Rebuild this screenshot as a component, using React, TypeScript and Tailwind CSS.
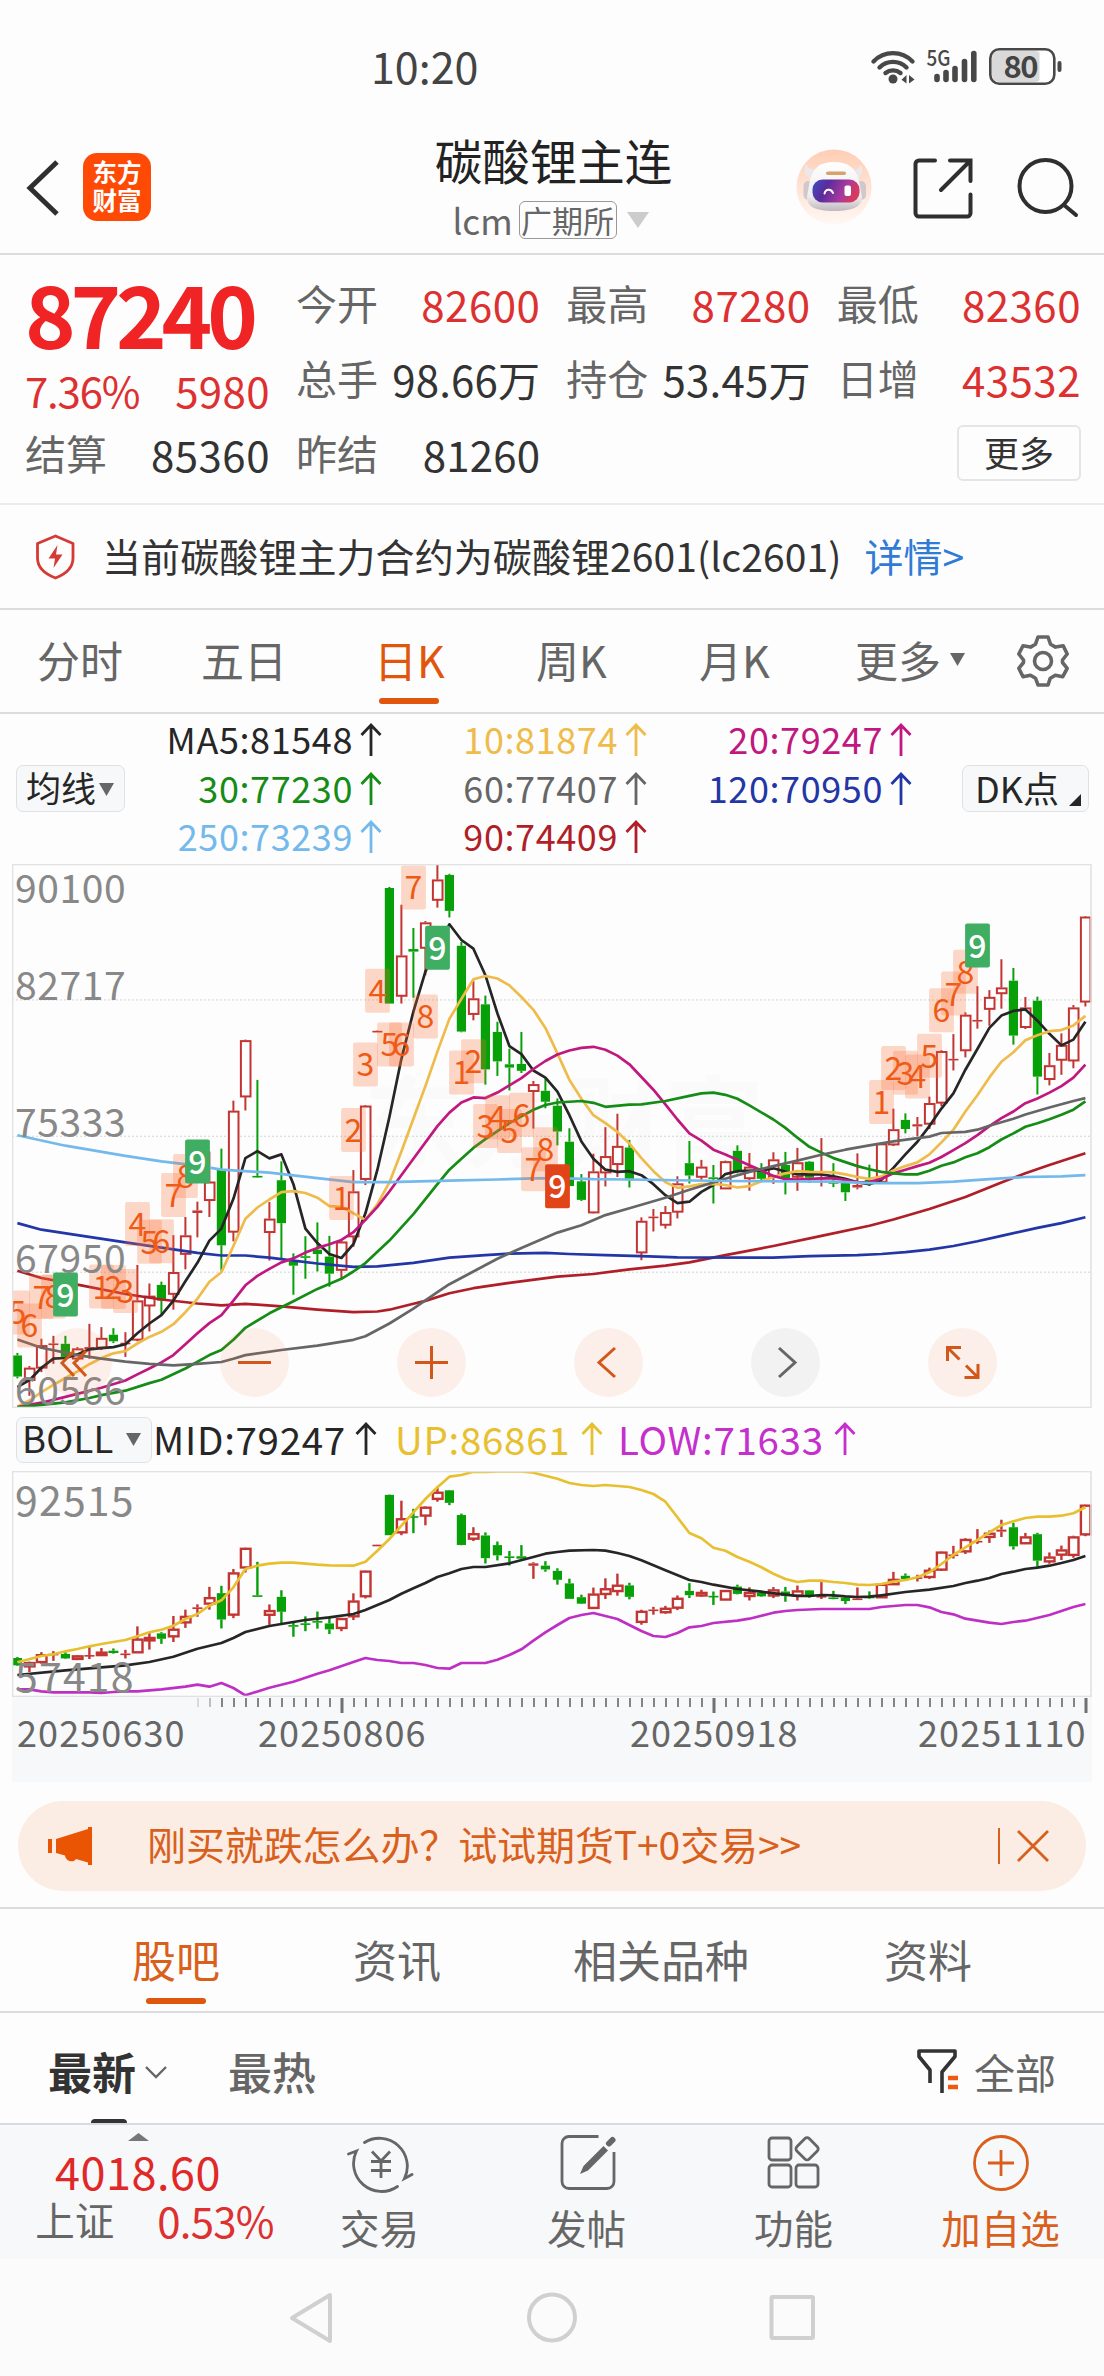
import React from 'react';

// Candles are stored as chart levels: [rising, high, body top, body bottom, low]
const candles = [
  [0, 1384, 1391, 1449, 1454], [1, 1420, 1425, 1459, 1502], [1, 1345, 1363, 1425, 1437],
  [1, 1337, 1358, 1362, 1414], [0, 1337, 1359, 1395, 1400], [1, 1368, 1372, 1400, 1408],
  [1, 1304, 1368, 1374, 1400], [1, 1313, 1343, 1370, 1376], [0, 1316, 1334, 1352, 1357],
  [1, 1327, 1356, 1360, 1395], [1, 1142, 1240, 1348, 1352], [1, 1193, 1227, 1254, 1325],
  [0, 1188, 1197, 1240, 1280], [1, 1060, 1162, 1222, 1265], [1, 1010, 1061, 1112, 1154],
  [1, 968, 992, 999, 1066], [1, 830, 913, 964, 1010], [0, 822, 880, 1088, 1158],
  [1, 690, 718, 1051, 1077], [1, 522, 524, 679, 717], [0, 633, 897, 900, 901],
  [1, 969, 1015, 1052, 1130], [0, 857, 909, 1027, 1125], [0, 1110, 1132, 1144, 1224],
  [0, 1063, 1118, 1122, 1180], [0, 1025, 1100, 1112, 1160], [0, 1062, 1119, 1166, 1202],
  [1, 1075, 1078, 1156, 1180], [1, 881, 940, 1064, 1092], [1, 702, 704, 906, 922],
  [1, 497, 498, 500, 500], [0, 102, 105, 423, 423], [1, 151, 291, 402, 423],
  [0, 215, 273, 280, 407], [1, 196, 200, 270, 345], [1, 39, 82, 138, 159],
  [0, 66, 69, 168, 186], [0, 253, 264, 500, 502], [1, 360, 409, 452, 469],
  [0, 401, 425, 604, 646], [0, 473, 501, 582, 622], [0, 547, 590, 599, 662],
  [0, 501, 589, 608, 614], [1, 636, 645, 664, 767], [0, 628, 663, 693, 711],
  [0, 684, 704, 775, 813], [0, 766, 803, 925, 925], [0, 892, 912, 963, 966],
  [1, 836, 885, 998, 1000], [1, 763, 843, 888, 926], [1, 726, 815, 865, 900],
  [0, 798, 819, 909, 929], [1, 1011, 1021, 1108, 1129], [1, 988, 1009, 1012, 1050],
  [1, 980, 997, 1032, 1042], [1, 898, 918, 996, 1014], [0, 801, 862, 896, 918],
  [1, 853, 872, 900, 908], [0, 867, 901, 905, 973], [1, 855, 857, 932, 932],
  [0, 813, 828, 886, 890], [1, 834, 872, 904, 938], [0, 862, 875, 905, 910],
  [1, 832, 852, 900, 919], [0, 831, 867, 903, 948], [1, 820, 860, 900, 938],
  [0, 856, 858, 902, 916], [1, 793, 902, 906, 926], [0, 862, 914, 918, 928],
  [0, 910, 916, 942, 966], [1, 835, 922, 929, 934], [0, 866, 908, 920, 925],
  [1, 806, 808, 914, 916], [1, 712, 769, 811, 815], [0, 725, 743, 768, 780],
  [1, 735, 755, 761, 788], [1, 679, 697, 754, 768], [1, 551, 554, 696, 705],
  [1, 507, 575, 579, 607], [1, 447, 454, 552, 571], [1, 375, 468, 472, 492],
  [1, 386, 405, 438, 484], [1, 301, 379, 395, 437], [0, 325, 360, 511, 536],
  [1, 405, 434, 488, 493], [0, 404, 415, 624, 673], [1, 559, 593, 631, 648],
  [1, 505, 537, 578, 619], [1, 427, 434, 580, 601], [1, 182, 184, 418, 431],
];

// Each line is a flat list of candle index / level pairs
const averages = [
  { color: '#b01e28', points: [0, 1158, 2, 1178, 5, 1196, 9, 1222, 12, 1237, 15, 1248, 17, 1253, 19, 1249, 22, 1256, 25, 1265, 28, 1272, 30, 1270, 31, 1265, 33, 1249, 34, 1241, 36, 1220, 38, 1206, 41, 1191, 45, 1174, 48, 1167, 51, 1154, 54, 1144, 56, 1135, 59, 1115, 63, 1090, 67, 1062, 71, 1034, 73, 1017, 76, 988, 79, 955, 82, 915, 84, 890, 86, 867, 89, 835] },
  { color: '#2236a6', points: [0, 1027, 2, 1045, 5, 1060, 9, 1080, 13, 1099, 15, 1109, 17, 1116, 19, 1116, 21, 1122, 23, 1130, 25, 1138, 28, 1147, 30, 1146, 33, 1136, 36, 1122, 39, 1115, 41, 1111, 44, 1109, 46, 1112, 49, 1115, 52, 1118, 55, 1121, 63, 1122, 66, 1118, 70, 1115, 72, 1112, 74, 1107, 76, 1100, 78, 1090, 80, 1077, 82, 1062, 85, 1040, 87, 1027, 89, 1011] },
  { color: '#262626', points: [0, 1478, 1, 1459, 2, 1425, 3, 1400, 4, 1398, 5, 1388, 6, 1374, 7, 1371, 8, 1368, 9, 1360, 10, 1330, 11, 1303, 12, 1280, 13, 1240, 14, 1187, 15, 1136, 16, 1075, 17, 1042, 18, 960, 19, 848, 20, 829, 21, 849, 22, 838, 23, 920, 24, 1042, 25, 1082, 26, 1112, 27, 1123, 28, 1085, 29, 1000, 30, 880, 31, 735, 32, 575, 33, 445, 34, 335, 35, 268, 36, 205, 37, 248, 38, 272, 39, 345, 40, 450, 41, 540, 42, 562, 43, 607, 44, 627, 45, 665, 46, 730, 47, 802, 48, 850, 49, 880, 50, 886, 51, 884, 52, 895, 53, 920, 54, 950, 55, 972, 56, 968, 57, 941, 58, 922, 59, 892, 60, 884, 62, 882, 63, 876, 64, 885, 65, 893, 67, 893, 68, 898, 69, 905, 70, 915, 71, 920, 72, 908, 73, 875, 74, 838, 75, 803, 76, 760, 77, 712, 78, 670, 79, 605, 80, 548, 81, 490, 82, 456, 83, 443, 84, 439, 85, 470, 86, 506, 87, 538, 88, 522, 89, 473] },
  { color: '#efbb4a', points: [0, 1532, 1, 1515, 2, 1492, 3, 1472, 4, 1453, 5, 1435, 6, 1415, 7, 1398, 8, 1385, 9, 1379, 10, 1358, 11, 1340, 12, 1326, 13, 1305, 14, 1272, 15, 1235, 16, 1188, 17, 1162, 18, 1090, 19, 1015, 20, 984, 21, 962, 22, 942, 23, 939, 24, 944, 25, 957, 26, 980, 27, 982, 28, 1000, 29, 1018, 30, 975, 31, 915, 32, 830, 33, 740, 34, 650, 35, 555, 36, 465, 37, 410, 38, 356, 39, 347, 40, 354, 41, 373, 42, 405, 43, 440, 44, 490, 45, 560, 46, 633, 47, 685, 48, 730, 49, 752, 50, 776, 51, 808, 52, 848, 53, 884, 54, 914, 55, 930, 56, 926, 57, 920, 58, 919, 59, 922, 60, 929, 61, 925, 62, 912, 63, 900, 64, 890, 65, 884, 66, 886, 68, 887, 69, 893, 70, 900, 71, 905, 72, 899, 73, 882, 74, 870, 75, 860, 76, 838, 77, 805, 78, 770, 79, 720, 80, 675, 81, 626, 82, 583, 83, 557, 84, 524, 85, 510, 86, 499, 87, 496, 88, 483, 89, 457] },
  { color: '#c0187e', points: [0, 1533, 2, 1521, 4, 1505, 7, 1480, 9, 1460, 10, 1443, 11, 1427, 12, 1410, 13, 1390, 14, 1360, 15, 1330, 16, 1302, 17, 1280, 18, 1240, 19, 1198, 20, 1172, 21, 1153, 22, 1135, 23, 1124, 24, 1108, 25, 1095, 26, 1085, 27, 1073, 28, 1052, 29, 1018, 30, 982, 31, 940, 33, 850, 35, 760, 36, 723, 37, 695, 38, 681, 39, 683, 40, 668, 41, 648, 42, 628, 43, 603, 44, 581, 45, 563, 46, 552, 47, 545, 48, 542, 49, 550, 50, 566, 51, 590, 52, 625, 53, 660, 54, 700, 55, 742, 56, 780, 57, 800, 58, 825, 59, 838, 61, 868, 62, 882, 63, 897, 64, 906, 65, 907, 67, 904, 68, 904, 69, 908, 70, 915, 71, 914, 72, 905, 73, 890, 74, 880, 75, 870, 76, 861, 77, 845, 78, 826, 79, 807, 80, 785, 81, 760, 82, 738, 83, 720, 84, 697, 85, 684, 86, 668, 87, 650, 88, 627, 89, 591] },
  { color: '#158c15', points: [0, 1534, 2, 1527, 4, 1520, 6, 1508, 7, 1500, 9, 1488, 11, 1467, 12, 1458, 14, 1427, 16, 1390, 17, 1376, 18, 1348, 19, 1315, 21, 1275, 23, 1242, 25, 1208, 27, 1180, 28, 1160, 29, 1137, 31, 1075, 33, 1002, 35, 920, 36, 880, 37, 850, 38, 820, 39, 796, 41, 752, 42, 733, 43, 715, 44, 702, 45, 695, 47, 691, 48, 696, 49, 707, 51, 701, 52, 700, 54, 691, 56, 677, 57, 670, 58, 668, 59, 674, 60, 685, 61, 703, 63, 742, 64, 765, 65, 792, 66, 817, 67, 833, 68, 848, 70, 870, 71, 879, 72, 886, 73, 890, 74, 893, 75, 893, 76, 883, 77, 869, 78, 860, 79, 846, 80, 835, 81, 818, 82, 797, 83, 780, 84, 762, 85, 752, 86, 741, 87, 729, 88, 715, 89, 692] },
  { color: '#666666', points: [0, 1347, 2, 1370, 5, 1390, 7, 1400, 9, 1408, 11, 1414, 13, 1418, 15, 1414, 17, 1409, 18, 1400, 19, 1390, 22, 1376, 25, 1364, 28, 1348, 29, 1338, 31, 1303, 33, 1262, 35, 1217, 36, 1195, 38, 1160, 40, 1125, 42, 1095, 45, 1053, 47, 1033, 49, 1005, 51, 986, 54, 957, 56, 935, 59, 905, 61, 886, 63, 870, 65, 855, 67, 839, 69, 825, 71, 813, 73, 802, 75, 793, 76, 789, 77, 779, 79, 776, 80, 770, 81, 759, 83, 740, 84, 728, 86, 709, 88, 691, 89, 683] },
  { color: '#74b9ec', points: [0, 785, 4, 814, 9, 842, 12, 857, 15, 869, 17, 880, 21, 888, 25, 903, 28, 914, 31, 914, 36, 910, 40, 907, 43, 904, 45, 903, 48, 906, 51, 907, 59, 911, 68, 913, 71, 917, 75, 917, 78, 913, 81, 906, 84, 900, 87, 898, 89, 895] },
];

const bands = [
  { color: '#262626', points: [0, 828, 4, 814, 9, 799, 11, 789, 13, 773, 15, 749, 17, 732, 18, 717, 19, 699, 21, 681, 22, 675, 24, 663, 26, 655, 28, 645, 29, 633, 31, 603, 32, 584, 33, 568, 34, 552, 35, 534, 36, 523, 37, 510, 38, 504, 39, 504, 41, 493, 43, 474, 44, 464, 45, 459, 46, 455, 48, 453, 49, 455, 50, 462, 51, 471, 52, 484, 54, 514, 56, 543, 57, 549, 58, 557, 60, 570, 62, 578, 64, 587, 65, 591, 66, 591, 67, 588, 68, 589, 69, 592, 70, 594, 71, 593, 72, 589, 74, 579, 76, 572, 78, 561, 79, 552, 80, 545, 81, 537, 82, 525, 83, 518, 84, 510, 85, 506, 86, 500, 87, 492, 88, 483, 89, 471] },
  { color: '#e8c02f', points: [0, 790, 2, 771, 3, 766, 4, 757, 5, 750, 6, 742, 7, 735, 8, 729, 9, 723, 10, 712, 11, 700, 12, 692, 13, 680, 14, 660, 15, 645, 16, 620, 17, 604, 18, 565, 19, 510, 20, 500, 21, 494, 22, 491, 23, 491, 24, 494, 25, 497, 26, 499, 28, 500, 29, 488, 30, 455, 31, 420, 32, 380, 33, 340, 34, 300, 35, 265, 36, 233, 37, 228, 38, 218, 39, 219, 40, 217, 42, 217, 43, 221, 44, 230, 45, 239, 46, 252, 47, 258, 48, 261, 49, 258, 50, 261, 51, 264, 52, 273, 53, 285, 54, 308, 55, 355, 56, 402, 57, 418, 58, 446, 59, 455, 60, 474, 61, 488, 62, 505, 63, 524, 64, 540, 65, 549, 66, 545, 67, 545, 68, 549, 69, 552, 70, 557, 71, 558, 72, 555, 73, 548, 74, 543, 75, 535, 76, 520, 77, 495, 78, 468, 79, 445, 80, 423, 81, 400, 82, 378, 83, 367, 84, 357, 85, 353, 86, 353, 87, 350, 88, 343, 89, 325] },
  { color: '#be30c4', points: [0, 871, 1, 871, 2, 877, 3, 880, 6, 880, 7, 882, 8, 879, 9, 877, 10, 877, 12, 871, 14, 863, 15, 857, 16, 863, 17, 852, 18, 867, 19, 889, 21, 866, 23, 848, 25, 824, 26, 814, 28, 789, 29, 777, 30, 783, 31, 786, 32, 792, 33, 792, 34, 798, 35, 807, 36, 809, 37, 792, 39, 792, 40, 782, 41, 768, 42, 751, 43, 725, 44, 700, 45, 678, 46, 657, 47, 648, 48, 642, 50, 660, 52, 696, 53, 711, 54, 714, 55, 702, 56, 685, 57, 681, 58, 672, 60, 665, 61, 659, 63, 641, 64, 636, 65, 633, 67, 630, 71, 630, 72, 624, 74, 618, 75, 618, 76, 625, 77, 639, 78, 646, 79, 659, 80, 665, 81, 671, 82, 675, 83, 669, 84, 665, 86, 648, 88, 624, 89, 615] },
];

// Sequence counters: [candle index, digit, top level]
const counters = [
  [0, 5, 1212], [1, 6, 1248], [2, 7, 1170], [3, 8, 1168], [4, 9, 1163],
  [7, 1, 1141], [8, 2, 1142], [9, 3, 1153], [10, 4, 969], [11, 5, 1018],
  [12, 6, 1016], [13, 7, 889], [14, 8, 837], [15, 9, 797],
  [27, 1, 897], [28, 2, 710], [29, 3, 530], [30, 4, 327], [31, 5, 475],
  [32, 6, 475], [33, 7, 43], [34, 8, 398], [35, 9, 209],
  [37, 1, 552], [38, 2, 521], [39, 3, 699], [40, 4, 675], [41, 5, 713],
  [42, 6, 668], [43, 7, 818], [44, 8, 763], [45, 9, 865],
  [72, 1, 633], [73, 2, 540], [74, 3, 553], [75, 4, 563], [76, 5, 506],
  [77, 6, 381], [78, 7, 335], [79, 8, 275], [80, 9, 203],
];

const RED = '#c23532';
const GREEN = '#08a008';

const xOf = (i: number) => 5.4 + i * 12;
const mainY = (v: number) => (v - 39) / 2.751;
const subY = (v: number) => ((2415 + (v - 39) * 19.755) / 35097) * 225.3;
const bandY = (v: number) => (v - 216) / 3;

const toPoints = (points: number[], y: (v: number) => number) => {
  const out: string[] = [];
  for (let k = 0; k < points.length; k += 2) {
    out.push(`${xOf(points[k]).toFixed(1)},${y(points[k + 1]).toFixed(1)}`);
  }
  return out.join(' ');
};

const Candles = ({ y, stroke }: { y: (v: number) => number; stroke: number }) => (
  <g>
    {candles.map(([rising, high, top, bottom, low], i) => {
      const x = xOf(i);
      const color = rising ? RED : GREEN;
      const h = y(bottom) - y(top);
      return (
        <g key={i} stroke={color} strokeWidth={stroke}>
          <line x1={x} x2={x} y1={y(high)} y2={y(top)} />
          <line x1={x} x2={x} y1={y(bottom)} y2={y(low)} />
          {h < 2.6 ? (
            <rect x={x - 5} y={y(top)} width={10} height={Math.max(h, 1.6)} fill={color} stroke="none" />
          ) : rising ? (
            <rect x={x - 4.5} y={y(top) + 0.8} width={9.6} height={Math.max(h - 1, 1)} fill="#fff" />
          ) : (
            <rect x={x - 4.6} y={y(top)} width={9.2} height={h} fill={color} stroke="none" />
          )}
        </g>
      );
    })}
  </g>
);

const Counters = () => (
  <g fontSize={32} textAnchor="middle">
    {counters.map(([i, digit, top], k) => {
      const nine = digit === 9;
      const fill = nine ? (i === 45 ? '#e2441a' : '#3fae63') : '#fa6e32';
      return (
        <g key={k}>
          <rect x={xOf(i) - 12.3} y={mainY(top)} width={24.8} height={44} rx={2} fill={fill} fillOpacity={nine ? 1 : 0.26} />
          <text x={xOf(i)} y={mainY(top) + 34} fill={nine ? '#fff' : '#ee5a14'} fontWeight={nine ? 500 : 400}>
            {digit}
          </text>
        </g>
      );
    })}
  </g>
);

const MainChart = () => (
  <svg width="1080" height="544" viewBox="0 0 1080 544" className="block">
    <defs>
      <clipPath id="main-clip">
        <rect x="0" y="0" width="1080" height="544" />
      </clipPath>
    </defs>
    <text x="352" y="296" fontSize="100" fontWeight="700" fill="#fafafa">
      东方财富
    </text>
    {[413, 788, 1162].map((v) => (
      <line key={v} x1="0" x2="1079" y1={mainY(v)} y2={mainY(v)} stroke="#d4d4d4" strokeWidth="1" strokeDasharray="2 2" />
    ))}
    <g clipPath="url(#main-clip)">
      <Candles y={mainY} stroke={2} />
      <g fill="none" strokeWidth="2.7" strokeLinejoin="round">
        {averages.map((line) => (
          <polyline key={line.color} points={toPoints(line.points, mainY)} stroke={line.color} />
        ))}
      </g>
      <Counters />
    </g>
    <g fontSize="39" fill="#888" letterSpacing="0.6">
      <text x="3" y="38.5">90100</text>
      <text x="3" y="136">82717</text>
      <text x="3" y="272.5">75333</text>
      <text x="3" y="408.5">67950</text>
      <text x="3" y="540.5">60566</text>
    </g>
    <rect x="0.5" y="0.5" width="1078.5" height="543" fill="none" stroke="#e2e2e2" strokeWidth="1.6" />
  </svg>
);

const BollChart = () => (
  <svg width="1080" height="226" viewBox="0 0 1080 226" className="block">
    <Candles y={subY} stroke={2.4} />
    <g fill="none" strokeWidth="2.7" strokeLinejoin="round">
      {bands.map((line) => (
        <polyline key={line.color} points={toPoints(line.points, bandY)} stroke={line.color} />
      ))}
    </g>
    <g fontSize="41" fill="#888" letterSpacing="1.2">
      <text x="3" y="45">92515</text>
      <text x="3" y="220.5">57418</text>
    </g>
    <rect x="0.5" y="0.5" width="1078.5" height="225" fill="none" stroke="#e2e2e2" strokeWidth="1.6" />
  </svg>
);

const DateAxis = () => (
  <svg width="1080" height="85" viewBox="0 0 1080 85" className="block bg-[#f7f8fa]">
    {candles.map((_, i) => {
      if (i < 15) return null;
      const major = i === 27 || i === 58 || i === 89;
      return (
        <line
          key={i}
          x1={xOf(i) + 0.6}
          x2={xOf(i) + 0.6}
          y1={1}
          y2={major ? 16 : 10}
          stroke="#707070"
          strokeWidth={major ? 3 : 1.7}
          opacity={i === 15 ? 0.25 : i === 16 ? 0.5 : 1}
        />
      );
    })}
    <g fontSize="36" fill="#666" letterSpacing="1.1">
      <text x="5" y="49.5">20250630</text>
      <text x="246" y="49.5">20250806</text>
      <text x="618" y="49.5">20250918</text>
      <text x="906" y="49.5">20251110</text>
    </g>
  </svg>
);

const UpArrow = ({ className = '' }: { className?: string }) => (
  <svg width="22" height="34" viewBox="0 0 22 34" fill="none" stroke="currentColor" strokeWidth="2.8" className={className}>
    <path d="M11 33V2M1.5 12 11 2l9.5 10" />
  </svg>
);

const StatusBar = () => (
  <div className="flex h-[90px] items-start pl-[371px] text-[#444]">
    <span className="mt-[35px] h-[55px] text-[43px] leading-[60px]">10:20</span>
    <svg width="200" height="44" viewBox="0 0 200 44" className="ml-[391px] mt-[45px]" fill="none" stroke="#484848">
      <g strokeWidth="4.4" strokeLinecap="round">
        <path d="M4.5 16.5a27 27 0 0 1 39 0" />
        <path d="M10.5 22.5a19 19 0 0 1 27 0" />
        <path d="M16.5 28a12 12 0 0 1 15 0" />
      </g>
      <circle cx="24" cy="34" r="4.5" fill="#484848" stroke="none" />
      <path d="M37.5 30v8.5l-5-3.8zM40 30v8.5l5.5-4z" fill="#484848" stroke="none" />
      <g strokeWidth="5.6" strokeLinecap="round">
        <path d="M68 31.5v3M77 27.5v7M86 23.5v11M95.5 16.5v18M104.8 8.5v26" />
      </g>
      <text x="57.5" y="21" fontSize="22" fontWeight="500" textLength="24" lengthAdjust="spacingAndGlyphs" fill="#484848" stroke="none">
        5G
      </text>
      <rect x="123" y="6" width="50" height="31" rx="7" fill="#d9d9d9" stroke="none" />
      <rect x="170.5" y="8" width="11" height="28" fill="#fff" stroke="none" />
      <rect x="121.3" y="4.3" width="64" height="34.5" rx="9" strokeWidth="2.6" />
      <rect x="188.5" y="16" width="4" height="11" rx="2" fill="#484848" stroke="none" />
      <text x="152" y="32.5" fontSize="31" fontWeight="700" textAnchor="middle" textLength="35" fill="#444" stroke="none">
        80
      </text>
    </svg>
  </div>
);

const Robot = () => (
  <svg width="76" height="76" viewBox="0 0 76 76">
    <defs>
      <linearGradient id="halo" x1="0" y1="0" x2="0" y2="1">
        <stop offset="0" stopColor="#ffcdb4" />
        <stop offset="1" stopColor="#fff8f4" />
      </linearGradient>
      <linearGradient id="visor" x1="0" y1="0" x2="1" y2="0.25">
        <stop offset="0" stopColor="#3d4fc4" />
        <stop offset="0.35" stopColor="#5a2c9c" />
        <stop offset="0.75" stopColor="#a83a9c" />
        <stop offset="1" stopColor="#d8395e" />
      </linearGradient>
      <linearGradient id="shell" x1="0" y1="0" x2="0" y2="1">
        <stop offset="0" stopColor="#ffffff" />
        <stop offset="0.7" stopColor="#efecee" />
        <stop offset="1" stopColor="#bfb9be" />
      </linearGradient>
    </defs>
    <circle cx="38" cy="38" r="37.5" fill="url(#halo)" />
    <path d="M10 15c-3 6-2 12 7 15l6-9c-7 0-11-2-13-6zM65 16c3 6 1 11-6 14l-7-9c7 1 11-1 13-5z" fill="#ece8ea" />
    <rect x="7.5" y="32" width="11" height="19" rx="5" fill="#cfc9ce" />
    <rect x="59" y="32" width="11" height="19" rx="5" fill="#cfc9ce" />
    <path d="M38 13c14 0 22 6 25 19l3 16c0 9-8 14-28 14S11 57 11 48l3-17c3-12 10-18 24-18z" fill="url(#shell)" />
    <rect x="30" y="22.5" width="20" height="3.6" rx="1.8" fill="#d9a26a" />
    <rect x="16.5" y="30.5" width="47" height="23" rx="10" fill="url(#visor)" />
    <path d="M28.5 44.5c1-5 7-5 8.5-.5" fill="none" stroke="#fff" strokeWidth="2" strokeLinecap="round" />
    <rect x="48.5" y="36.5" width="6.5" height="10.5" rx="2" fill="#fff" />
  </svg>
);

const Header = () => (
  <header className="flex h-[165px] items-start border-b-2 border-[#dcdcdc] text-[#333]">
    <svg width="36" height="58" viewBox="0 0 36 58" className="ml-[25px] mt-[69px]" fill="none" stroke="#2f2f2f" strokeWidth="5">
      <path d="M32 3 5 29l27 26" />
    </svg>
    <div className="ml-[22px] mt-[63px] flex h-[68px] w-[68px] flex-col items-center justify-center rounded-[14px] bg-[#ff4a06] pb-[3px] text-[24.5px] font-bold leading-[28px] text-white">
      <span>东方</span>
      <span>财富</span>
    </div>
    <div className="ml-[253px] mt-[41px] flex w-[330px] flex-col items-center">
      <h1 className="-ml-[31px] text-[47.5px] leading-[58px] text-[#222]">碳酸锂主连</h1>
      <div className="-ml-[37px] mt-[12px] flex items-center text-[#666]">
        <span className="text-[35px] leading-[38px]">lcm</span>
        <span className="ml-[6px] flex h-[38px] w-[98px] items-center justify-center rounded-[6px] border-[1.5px] border-[#999] text-[31px] leading-[34px]">
          广期所
        </span>
        <svg width="22" height="16" viewBox="0 0 22 16" className="ml-[10px]">
          <path d="M0 0h22L11 16z" fill="#ccc" />
        </svg>
      </div>
    </div>
    <div className="ml-[62px] mt-[59px] flex">
      <Robot />
      <svg width="62" height="62" viewBox="0 0 62 62" className="ml-[40px] mt-[8px]" fill="none" stroke="#2f2f2f" strokeWidth="4" strokeLinecap="round">
        <path d="M23 3.5H7a3.5 3.5 0 0 0-3.5 3.5v49A3.5 3.5 0 0 0 7 59.5h48a3.500 3.500 0 0 0 3.500-3.500V37.5M38 3.5h20.500V24M57.500 4.500 29 33" />
      </svg>
      <svg width="64" height="64" viewBox="0 0 64 64" className="ml-[41px] mt-[5px]" fill="none" stroke="#2f2f2f" strokeWidth="4" strokeLinecap="round">
        <circle cx="30.5" cy="32" r="26" />
        <path d="m49 51 12 10" />
      </svg>
    </div>
  </header>
);

const quotes = [
  { label: '今开', value: '82600', red: true },
  { label: '最高', value: '87280', red: true },
  { label: '最低', value: '82360', red: true },
  { label: '总手', value: '98.66万', red: false },
  { label: '持仓', value: '53.45万', red: false },
  { label: '日增', value: '43532', red: true },
  { label: '昨结', value: '81260', red: false },
];

const QuotePanel = () => (
  <section className="flex h-[250px] gap-[26px] border-b-2 border-[#ebebeb] pl-[25px] text-[42px]">
    <div className="w-[245px]">
      <div className="mt-[12px] h-[90px] text-[86px] font-bold leading-[90px] tracking-[-5.2px] text-[#f02424]">87240</div>
      <div className="mt-[8px] flex h-[50px] justify-between leading-[50px] text-[#dd3030]">
        <span className="tracking-[-1.2px]">7.36%</span>
        <span className="tracking-[0.4px]">5980</span>
      </div>
      <div className="mt-[13px] flex h-[50px] items-center justify-between">
        <span className="text-[41px] text-[#666]">结算</span>
        <span className="tracking-[0.5px] text-[#333]">85360</span>
      </div>
    </div>
    <div className="grid h-[234px] w-[785px] grid-cols-3 grid-rows-3 gap-x-[26px] pt-[9px]">
      {quotes.map((q) => (
        <div key={q.label} className="flex h-[78px] items-center justify-between whitespace-nowrap">
          <span className="text-[41px] text-[#666]">{q.label}</span>
          <span className={q.red ? 'tracking-[0.5px] text-[#dd3030]' : 'tracking-[0.2px] text-[#333]'}>{q.value}</span>
        </div>
      ))}
      <div className="col-start-3 flex h-[78px] items-center justify-end">
        <button className="h-[56px] w-[124px] rounded-[6px] border-2 border-[#e4e5e7] pb-[3px] text-[35px] leading-[50px] text-[#333]">
          更多
        </button>
      </div>
    </div>
  </section>
);

const Notice = () => (
  <section className="flex h-[105px] items-center border-b-2 border-[#dcdcdc] pl-[35px] text-[39px] text-[#333]">
    <svg width="41" height="46" viewBox="0 0 41 46" fill="none" stroke="#d53a36" strokeWidth="2.8" strokeLinejoin="round">
      <path d="M20.5 2 38 9.5V24c0 9-7 16-17.500 20C10 40 2.500 33 2.500 24V9.500z" />
      <path d="m22.5 11-9 13.500h6.500L18.500 34l9-13.500H21z" fill="#d53a36" stroke="none" />
    </svg>
    <span className="ml-[26px] whitespace-nowrap pb-[2px] tracking-[0.08px]">当前碳酸锂主力合约为碳酸锂2601(lc2601)</span>
    <span className="ml-[23px] whitespace-nowrap pb-[2px] text-[#2f7bd6]">详情&gt;</span>
  </section>
);

const PeriodTabs = () => (
  <nav className="flex h-[104px] items-center border-b-2 border-[#dcdcdc] text-[43px] text-[#666]">
    <span className="-mt-[3px] ml-[37px] w-[164px]">分时</span>
    <span className="-mt-[3px] w-[173px]">五日</span>
    <span className="relative -mt-[3px] w-[162px] text-[#e0560c]">
      日K
      <i className="absolute left-[5px] top-[71px] h-[6px] w-[60px] rounded-[3px] bg-[#e0560c]" />
    </span>
    <span className="-mt-[3px] w-[163px]">周K</span>
    <span className="-mt-[3px] w-[156px]">月K</span>
    <span className="-mt-[3px] flex w-[162px] items-center">
      更多
      <svg width="15" height="13" viewBox="0 0 15 13" className="ml-[9px]">
        <path d="M0 0h15L7.500 13z" fill="#666" />
      </svg>
    </span>
    <svg width="52" height="52" viewBox="0 0 52 52" fill="none" stroke="#666" strokeWidth="3.6" strokeLinejoin="round">
      <path d="M21 2h10l2.500 7.200 5 2.900 7.700-1.300 4 8.200-4.700 6v2.500l4.700 5.800-4.400 8.400-7.500-1.500-5 3L31 50H21l-2.500-6.800-5-3L6 41.700l-4.200-8.400 4.700-5.800V25l-4.700-6 4.200-8.200 7.500 1.300 5-2.900z" />
      <circle cx="26" cy="26" r="8.5" />
    </svg>
  </nav>
);

const averageLabels = [
  { text: 'MA5:81548', tone: 'text-[#262626]' },
  { text: '10:81874', tone: 'text-[#efbb4a]' },
  { text: '20:79247', tone: 'text-[#c0187e]' },
  { text: '30:77230', tone: 'text-[#158c15]' },
  { text: '60:77407', tone: 'text-[#666]' },
  { text: '120:70950', tone: 'text-[#2236a6]' },
  { text: '250:73239', tone: 'text-[#74b9ec]' },
  { text: '90:74409', tone: 'text-[#b01e28]' },
];

const AverageLegend = () => (
  <section className="flex h-[150px] items-start">
    <button className="ml-[16px] mt-[51px] flex h-[47px] w-[109px] items-center rounded-[7px] border-[1.5px] border-[#dfe1e4] bg-[#f7f8fa] pb-[3px] pl-[9px] text-[35px] leading-[40px] text-[#262626]">
      均线
      <svg width="15" height="13" viewBox="0 0 15 13" className="ml-[3px] mt-[4px] shrink-0">
        <path d="M0 0h15L7.500 13z" fill="#666" />
      </svg>
    </button>
    <div className="-ml-[8px] grid w-[795px] grid-cols-3 text-[36px] tracking-[0.6px]">
      {averageLabels.map((label) => (
        <div key={label.text} className={`flex h-[48.5px] items-center justify-end leading-[48px] ${label.tone}`}>
          {label.text}
          <UpArrow className="ml-[7px] mt-[4px]" />
        </div>
      ))}
    </div>
    <button className="ml-[50px] mt-[51px] flex h-[47px] w-[127px] items-center rounded-[7px] border-[1.5px] border-[#dfe1e4] bg-[#f7f8fa] pb-[3px] pl-[12px] text-[36px] leading-[40px] text-[#262626]">
      DK点
      <svg width="12" height="12" viewBox="0 0 12 12" className="ml-[10px] mt-[26px] shrink-0">
        <path d="M12 0v12H0z" fill="#262626" />
      </svg>
    </button>
  </section>
);

const chartButtons = [
  { icon: 'M31 23 19 35l12 13M43 23 31 35l12 13', tone: 'bg-[#f97a3a]/10 text-[#d2571b]' },
  { icon: 'M18 34.5h33', tone: 'bg-[#f97a3a]/10 text-[#d2571b]' },
  { icon: 'M18 34.5h33M34.500 18v33', tone: 'bg-[#f97a3a]/10 text-[#d2571b]' },
  { icon: 'M41 20 25 34.500 41 49', tone: 'bg-[#f97a3a]/10 text-[#d2571b]' },
  { icon: 'M28 20l16 14.500L28 49', tone: 'bg-[#f2f2f2] text-[#666]' },
  { icon: 'M19.500 33V19.500h13.500M19.500 19.500l12 12M50 36v13.500H36.500M50 49.500l-12-12', tone: 'bg-[#f97a3a]/10 text-[#d2571b]' },
];

const Charts = () => (
  <section className="pl-[12px]">
    <div className="relative">
      <MainChart />
      <div className="absolute left-[31px] top-[464px] flex gap-[108px]">
        {chartButtons.map((button) => (
          <button key={button.icon} className={`h-[69px] w-[69px] rounded-full ${button.tone}`}>
            <svg width="69" height="69" viewBox="0 0 69 69" fill="none" stroke="currentColor" strokeWidth="3">
              <path d={button.icon} />
            </svg>
          </button>
        ))}
      </div>
    </div>
    <div className="flex h-[63px] items-center whitespace-nowrap pl-[4px] text-[38.5px] tracking-[0.7px]">
      <button className="flex h-[46px] w-[136px] items-center rounded-[7px] border-[1.5px] border-[#dfe1e4] bg-[#f7f8fa] pb-[4px] pl-[5px] text-[36.5px] leading-[40px] tracking-[0.2px] text-[#262626]">
        BOLL
        <svg width="15" height="13" viewBox="0 0 15 13" className="ml-[12px] mt-[3px] shrink-0">
          <path d="M0 0h15L7.500 13z" fill="#666" />
        </svg>
      </button>
      <span className="flex w-[243px] items-center pb-[4px] pl-[1px] leading-[56px] text-[#262626]">
        MID:79247
        <UpArrow className="ml-[9px] mt-[3px]" />
      </span>
      <span className="flex w-[223px] items-center pb-[4px] leading-[56px] text-[#e8c02f]">
        UP:86861
        <UpArrow className="ml-[11px] mt-[3px]" />
      </span>
      <span className="flex items-center pb-[4px] leading-[56px] text-[#c52fcb]">
        LOW:71633
        <UpArrow className="ml-[10px] mt-[3px]" />
      </span>
    </div>
    <BollChart />
    <DateAxis />
  </section>
);

const Banner = () => (
  <section className="mx-[18px] mt-[19px] flex h-[90px] items-center rounded-full bg-[#fcede4] text-[39px] text-[#d9601c]">
    <svg width="46" height="40" viewBox="0 0 46 40" className="ml-[29px]" fill="#ea5504">
      <path d="M1 13h4v14H1zM9 13 41 3V1h4v38h-4v-2.500l-12-3.500c-2 4-10 3-11-3.500L9 27z" />
    </svg>
    <span className="ml-[54px] w-[851px] whitespace-nowrap pb-[5px] tracking-[-0.1px]">刚买就跌怎么办？试试期货T+0交易&gt;&gt;</span>
    <i className="h-[36px] w-[1.5px] bg-[#d9601c]" />
    <svg width="34" height="34" viewBox="0 0 34 34" className="ml-[16px]" stroke="#d9601c" strokeWidth="2.8">
      <path d="m2 2 30 30M32 2 2 32" />
    </svg>
  </section>
);

const ForumTabs = () => (
  <nav className="mt-[16px] flex h-[106px] items-center border-b-2 border-t-2 border-[#dcdcdc] text-[44px] leading-[60px] text-[#666]">
    <span className="relative -mt-[3px] ml-[132px] w-[221px] text-[#d9601c]">
      股吧
      <i className="absolute left-[14px] top-[69px] h-[6px] w-[60px] rounded-[3px] bg-[#e0560c]" />
    </span>
    <span className="-mt-[3px] w-[220px]">资讯</span>
    <span className="-mt-[3px] w-[311px]">相关品种</span>
    <span className="-mt-[3px]">资料</span>
  </nav>
);

const SortRow = () => (
  <section className="relative flex h-[110px] items-center pt-[8px] text-[44px] text-[#666]">
    <span className="-mt-[2px] ml-[48px] font-bold text-[#333]">最新</span>
    <svg width="22" height="14" viewBox="0 0 22 14" className="ml-[9px]" fill="none" stroke="#666" strokeWidth="2.4">
      <path d="m1 2 10 10L21 2" />
    </svg>
    <span className="-mt-[2px] ml-[61px] w-[688px] font-medium">最热</span>
    <svg width="44" height="46" viewBox="0 0 44 46" fill="none" stroke="#333" strokeWidth="3.6" strokeLinejoin="round">
      <path d="M14 34V21L3 7.500V2h36v5.500L26 23v21" />
      <path d="M32 29h10M32 38h10" stroke="#ee5a14" strokeWidth="4.6" />
    </svg>
    <span className="ml-[14px] text-[41px]">全部</span>
    <i className="absolute bottom-0 left-[91px] h-[4px] w-[36px] rounded-t-[4px] bg-[#333]" />
  </section>
);

const BottomBar = () => (
  <footer className="flex h-[136px] border-t-2 border-[#d8dadd] bg-[#f7f8fa] text-[39.5px] text-[#666]">
    <div className="flex w-[276px] flex-col items-center">
      <svg width="21" height="8" viewBox="0 0 21 8" className="mt-[8px]">
        <path d="M0 8h21L10.500 0z" fill="#777" />
      </svg>
      <div className="mt-[6px] h-[46px] text-[45px] leading-[48px] tracking-[0.5px] text-[#e02828]">4018.60</div>
      <div className="ml-[33px] mt-[1px] flex h-[50px] items-center whitespace-nowrap">
        <span>上证</span>
        <span className="ml-[43px] text-[42px] tracking-[-0.8px] text-[#dd3030]">0.53%</span>
      </div>
    </div>
    <div className="flex w-[207px] flex-col items-center">
      <svg width="68" height="60" viewBox="0 0 68 60" className="mt-[8px] shrink-0" fill="none" stroke="#666" strokeWidth="2.8" strokeLinecap="round">
        <path d="M18.500 9.500A28 28 0 0 1 58.500 45.500L66 41.500M51.500 53.500A28 28 0 0 1 10.500 18L2.500 21" />
        <path d="m26 18.500 9 9.500 9-9.500M35 28v17M25 28.500h20M25 37.500h20" strokeLinecap="butt" />
      </svg>
      <span className="mt-[4px] h-[60px] leading-[60px]">交易</span>
    </div>
    <div className="flex w-[207px] flex-col items-center">
      <svg width="58" height="60" viewBox="0 0 58 60" className="mt-[7px] shrink-0" fill="none" stroke="#666" strokeWidth="2.8">
        <path d="M40.500 4.500H11a7 7 0 0 0-7 7v38a7 7 0 0 0 7 7h38a7 7 0 0 0 7-7V20" />
        <path d="m25.500 34 20-20 4.500 4.500-20 20-8 3.500z" fill="#666" stroke="none" />
        <path d="m51 11.500 3.500-3.500" strokeWidth="6" strokeLinecap="round" />
      </svg>
      <span className="mt-[5px] h-[60px] leading-[60px]">发帖</span>
    </div>
    <div className="flex w-[207px] flex-col items-center">
      <svg width="54" height="60" viewBox="0 0 54 60" className="mt-[7px] shrink-0" fill="none" stroke="#666" strokeWidth="2.8" strokeLinejoin="round">
        <rect x="2" y="6" width="22" height="22" rx="3" />
        <rect x="2" y="33" width="22" height="22" rx="3" />
        <rect x="29" y="33" width="22" height="22" rx="3" />
        <rect x="31.300" y="8" width="17.500" height="17.500" rx="3" transform="rotate(45 40 16.800)" />
      </svg>
      <span className="mt-[5px] h-[60px] leading-[60px]">功能</span>
    </div>
    <div className="flex w-[207px] flex-col items-center text-[#d9601c]">
      <svg width="60" height="60" viewBox="0 0 60 60" className="mt-[7px] shrink-0" fill="none" stroke="#d9601c" strokeWidth="2.8">
        <circle cx="30" cy="31" r="26.5" />
        <path d="M17 31h26M30 18v26" />
      </svg>
      <span className="mt-[5px] h-[60px] leading-[60px]">加自选</span>
    </div>
  </footer>
);

const SystemNav = () => (
  <div className="flex h-[117px] items-center bg-[#fbfbfb] pl-[288px]">
    <svg width="530" height="54" viewBox="0 0 530 54" fill="none" stroke="#d0d0d0" strokeWidth="4" strokeLinejoin="round">
      <path d="M42 4v46L4 27z" />
      <circle cx="264" cy="26.5" r="23" />
      <rect x="483.5" y="6" width="41.5" height="41" rx="1" />
    </svg>
  </div>
);

const App = () => {
  return (
    <main className="w-[1104px] overflow-hidden bg-[#fdfdfd] font-['Noto_Sans_CJK_SC',sans-serif]">
      <StatusBar />
      <Header />
      <QuotePanel />
      <Notice />
      <PeriodTabs />
      <AverageLegend />
      <Charts />
      <Banner />
      <ForumTabs />
      <SortRow />
      <BottomBar />
      <SystemNav />
    </main>
  );
};

export default App;
